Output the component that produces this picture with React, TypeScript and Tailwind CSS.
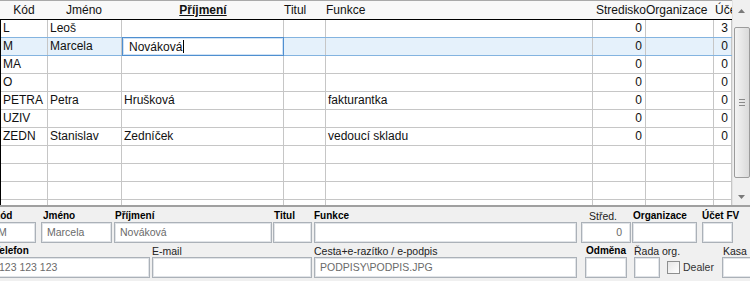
import React from "react";

const font = "font-['Liberation_Sans',Arial,sans-serif]";

const COLS = [47, 74, 162, 42, 267, 53, 68, 18];

interface Row {
  kod: string;
  jmeno: string;
  prijmeni: string;
  titul: string;
  funkce: string;
  stredisko: string;
  org: string;
  ucet: string;
  selected?: boolean;
}

const rows: Row[] = [
  { kod: "L", jmeno: "Leoš", prijmeni: "", titul: "", funkce: "", stredisko: "0", org: "", ucet: "3" },
  { kod: "M", jmeno: "Marcela", prijmeni: "Nováková", titul: "", funkce: "", stredisko: "0", org: "", ucet: "0", selected: true },
  { kod: "MA", jmeno: "", prijmeni: "", titul: "", funkce: "", stredisko: "0", org: "", ucet: "0" },
  { kod: "O", jmeno: "", prijmeni: "", titul: "", funkce: "", stredisko: "0", org: "", ucet: "0" },
  { kod: "PETRA", jmeno: "Petra", prijmeni: "Hrušková", titul: "", funkce: "fakturantka", stredisko: "0", org: "", ucet: "0" },
  { kod: "UZIV", jmeno: "", prijmeni: "", titul: "", funkce: "", stredisko: "0", org: "", ucet: "0" },
  { kod: "ZEDN", jmeno: "Stanislav", prijmeni: "Zedníček", titul: "", funkce: "vedoucí skladu", stredisko: "0", org: "", ucet: "0" },
];

const empty: Row = { kod: "", jmeno: "", prijmeni: "", titul: "", funkce: "", stredisko: "", org: "", ucet: "" };

function GridRow({ row }: { row: Row }) {
  const cells = [row.kod, row.jmeno, row.prijmeni, row.titul, row.funkce, row.stredisko, row.org, row.ucet];
  return (
    <div
      className={`relative flex h-[18px] shrink-0 border-b border-[#c6c6c6] ${
        row.selected ? "bg-[#e5f1fb]" : "bg-white"
      }`}
    >
      {cells.map((c, i) => {
        const right = i === 5 || i === 7;
        return (
          <div
            key={i}
            style={{ width: COLS[i] }}
            className={`relative h-full shrink-0 overflow-hidden whitespace-nowrap border-r border-[#c6c6c6] text-[12px] leading-[17px] text-[#111] ${
              right ? "pr-[3px] text-right" : "pl-[2px]"
            }`}
          >
            {row.selected && i === 2 ? null : c}
          </div>
        );
      })}
      {row.selected && (
        <>
          <div className="pointer-events-none absolute inset-x-0 -top-px -bottom-px border-y border-[#84b4e0]" />
          <div className="absolute -top-px -bottom-px left-[121px] flex w-[162px] items-center border border-[#4f8fd0] bg-white pl-[6px] text-[12px] text-[#111] shadow-[inset_0_0_0_1px_#cfe2f5]">
            Nováková
            <span className="ml-px h-[13px] w-px bg-black" />
          </div>
        </>
      )}
    </div>
  );
}

function Scrollbar() {
  return (
    <div className="flex h-[205px] w-[18px] shrink-0 flex-col items-center border-l border-[#e3e3e3] bg-[#f0f0f0]">
      <div className="flex h-[22px] items-center justify-center">
        <svg width="7" height="4" viewBox="0 0 7 4">
          <path d="M0 4 L3.5 0 L7 4 Z" fill="#7a7a7a" />
        </svg>
      </div>
      <div className="mt-[5px] flex h-[151px] w-[16px] items-center justify-center rounded-[2px] border border-[#9c9c9c] bg-gradient-to-r from-[#f4f4f4] to-[#dadada]">
        <div className="flex flex-col gap-[2px]">
          <span className="h-px w-[6px] bg-[#8a8a8a]" />
          <span className="h-px w-[6px] bg-[#8a8a8a]" />
          <span className="h-px w-[6px] bg-[#8a8a8a]" />
        </div>
      </div>
      <div className="flex flex-1 items-end justify-center pb-[6px]">
        <svg width="7" height="4" viewBox="0 0 7 4">
          <path d="M0 0 L3.5 4 L7 0 Z" fill="#7a7a7a" />
        </svg>
      </div>
    </div>
  );
}

function Field({
  label,
  bold = true,
  value = "",
  w,
  ml = 0,
  labelPl = 1,
  right = false,
}: {
  label: string;
  bold?: boolean;
  value?: string;
  w: number;
  ml?: number;
  labelPl?: number;
  right?: boolean;
}) {
  return (
    <div className="flex shrink-0 flex-col" style={{ width: w, marginLeft: ml }}>
      <div
        className={`h-[12px] whitespace-nowrap leading-[12px] ${
          bold ? "text-[10px] font-bold text-black" : "text-[10.5px] text-[#222]"
        }`}
        style={{ paddingLeft: labelPl }}
      >
        {label}
      </div>
      <div
        className={`h-[21px] overflow-hidden whitespace-nowrap border border-[#abb1b8] bg-white text-[10.5px] leading-[19px] text-[#6a6a6a] shadow-[inset_0_0_0_1px_#e1e4e8] ${
          right ? "pr-[8px] text-right" : "pl-[5px]"
        }`}
      >
        {value}
      </div>
    </div>
  );
}

export default function App() {
  return (
    <div className={`h-[281px] w-[750px] overflow-hidden bg-[#f0f0f0] ${font}`}>
      <div className="flex h-[205px]">
        <div className="flex w-[732px] shrink-0 flex-col">
          {/* header */}
          <div className="flex h-[20px] shrink-0 border-y border-t-[#a9a9a9] border-b-black bg-[#f8f8f8] text-[12px] leading-[18px] text-[#111]">
            <div className="w-[48px] shrink-0 text-center">Kód</div>
            <div className="w-[74px] shrink-0 pl-[18px]">Jméno</div>
            <div className="w-[162px] shrink-0 text-center font-bold underline">Příjmení</div>
            <div className="w-[42px] shrink-0">Titul</div>
            <div className="w-[267px] shrink-0">Funkce</div>
            <div className="w-[53px] shrink-0 whitespace-nowrap text-right">Stredisko</div>
            <div className="w-[68px] shrink-0 whitespace-nowrap">Organizace</div>
            <div className="w-[18px] shrink-0 overflow-hidden whitespace-nowrap pl-[1px]">Účet</div>
          </div>
          {/* body */}
          <div className="flex flex-1 flex-col overflow-hidden border-l border-black bg-white">
            {rows.map((r, i) => (
              <GridRow key={i} row={r} />
            ))}
            {[0, 1, 2, 3].map((i) => (
              <GridRow key={`e${i}`} row={empty} />
            ))}
          </div>
        </div>
        <Scrollbar />
      </div>
      <div className="h-[2px] bg-[#a0a0a0]" />

      {/* detail form */}
      <div className="-ml-[8px] flex flex-col gap-[2px] pt-[3px]">
        <div className="flex">
          <Field label="Kód" value="M" w={44} />
          <Field label="Jméno" value="Marcela" w={71} ml={5} labelPl={2} />
          <Field label="Příjmení" value="Nováková" w={158} ml={2} />
          <Field label="Titul" w={39} ml={1} />
          <Field label="Funkce" w={263} ml={2} labelPl={0} />
          <Field label="Střed." bold={false} value="0" w={50} ml={4} labelPl={8} right />
          <Field label="Organizace" w={65} ml={1} />
          <Field label="Účet FV" w={31} ml={5} labelPl={0} />
        </div>
        <div className="flex">
          <Field label="Telefon" value="123 123 123" w={157} ml={1} />
          <Field label="E-mail" bold={false} w={160} ml={2} labelPl={0} />
          <Field label="Cesta+e-razítko / e-podpis" bold={false} value="PODPISY\PODPIS.JPG" w={263} ml={2} labelPl={0} />
          <Field label="Odměna" w={42} ml={8} />
          <Field label="Řada org." bold={false} w={26} ml={7} labelPl={0} />
          <div className="ml-[7px] flex w-[55px] shrink-0 flex-col">
            <div className="h-[12px]" />
            <div className="flex h-[21px] items-center gap-[3px]">
              <span className="h-[13px] w-[13px] shrink-0 border border-[#8e8f8f] bg-gradient-to-br from-[#e6e6e6] to-white" />
              <span className="text-[10.5px] text-[#333]">Dealer</span>
            </div>
          </div>
          <Field label="Kasa" bold={false} w={34} ml={0} />
        </div>
      </div>
    </div>
  );
}
